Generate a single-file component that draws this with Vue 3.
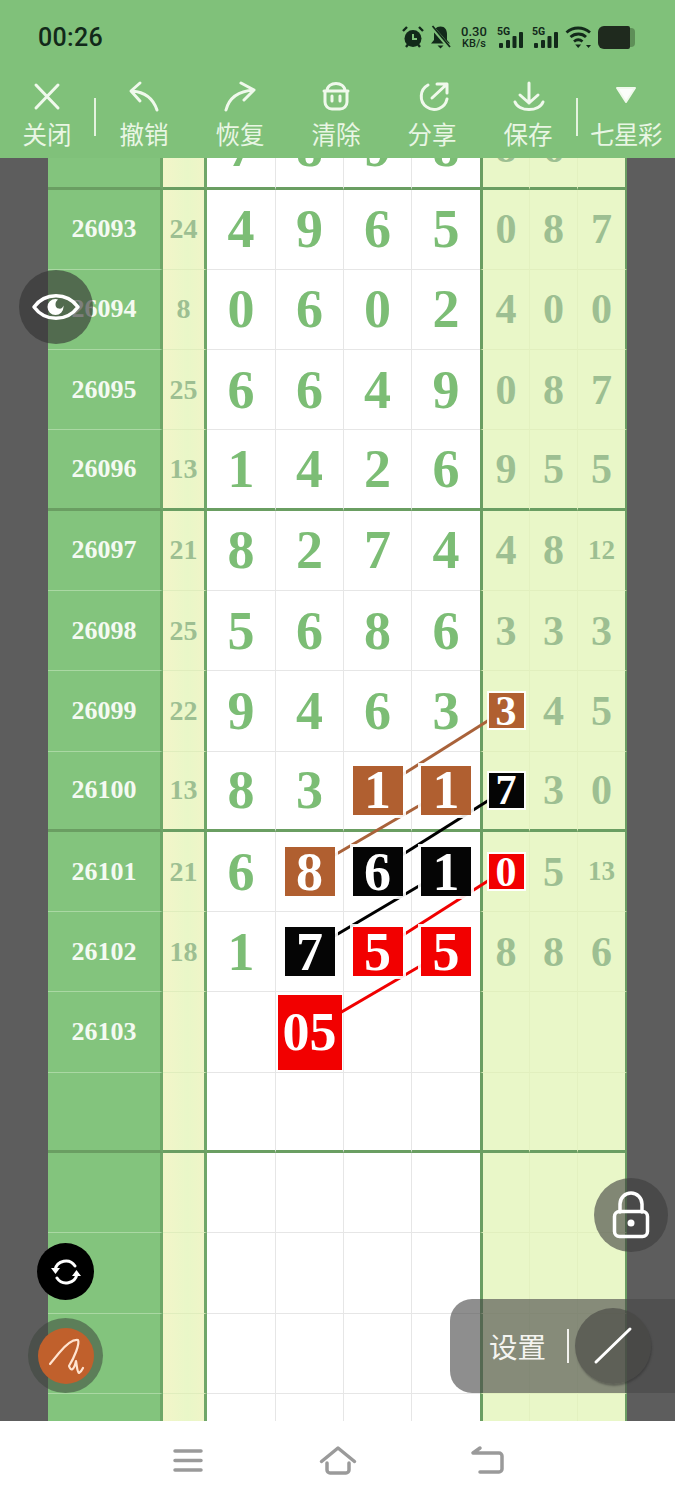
<script setup>
const rows = [
  { id: '26092', sum: '32', d: ['7', '8', '9', '8'], t: ['8', '6', '13'], end: true },
  { id: '26093', sum: '24', d: ['4', '9', '6', '5'], t: ['0', '8', '7'] },
  { id: '26094', sum: '8', d: ['0', '6', '0', '2'], t: ['4', '0', '0'] },
  { id: '26095', sum: '25', d: ['6', '6', '4', '9'], t: ['0', '8', '7'] },
  { id: '26096', sum: '13', d: ['1', '4', '2', '6'], t: ['9', '5', '5'], end: true },
  { id: '26097', sum: '21', d: ['8', '2', '7', '4'], t: ['4', '8', '12'] },
  { id: '26098', sum: '25', d: ['5', '6', '8', '6'], t: ['3', '3', '3'] },
  { id: '26099', sum: '22', d: ['9', '4', '6', '3'], t: [['3', 'brown'], '4', '5'] },
  { id: '26100', sum: '13', d: ['8', '3', ['1', 'brown'], ['1', 'brown']], t: [['7', 'black'], '3', '0'], end: true },
  { id: '26101', sum: '21', d: ['6', ['8', 'brown'], ['6', 'black'], ['1', 'black']], t: [['0', 'red'], '5', '13'] },
  { id: '26102', sum: '18', d: ['1', ['7', 'black'], ['5', 'red'], ['5', 'red']], t: ['8', '8', '6'] },
  { id: '26103', sum: '', d: ['', ['05', 'red big'], '', ''], t: ['', '', ''] },
  { id: '', sum: '', d: ['', '', '', ''], t: ['', '', ''], end: true },
  { id: '', sum: '', d: ['', '', '', ''], t: ['', '', ''] },
  { id: '', sum: '', d: ['', '', '', ''], t: ['', '', ''] },
  { id: '', sum: '', d: ['', '', '', ''], t: ['', '', ''] },
  { id: '', sum: '', d: ['', '', '', ''], t: ['', '', ''] }
]

const links = [
  { c: '#a9623a', x1: 309, y1: 870, x2: 446, y2: 790 },
  { c: '#a9623a', x1: 378, y1: 790, x2: 505, y2: 710 },
  { c: '#000000', x1: 309, y1: 951, x2: 446, y2: 870 },
  { c: '#000000', x1: 378, y1: 870, x2: 505, y2: 790 },
  { c: '#f00000', x1: 309, y1: 1031, x2: 446, y2: 951 },
  { c: '#f00000', x1: 378, y1: 951, x2: 505, y2: 870 }
]

const val = (c) => (Array.isArray(c) ? c[0] : c)
const mark = (c) => (Array.isArray(c) ? c[1] : '')
</script>

<template>
  <div class="screen">
    <header class="top">
      <div class="status">
        <span class="time">00:26</span>
        <div class="sys">
          <svg class="i-alarm" width="22" height="24" viewBox="0 0 22 24">
            <circle cx="11" cy="13.5" r="8.5" fill="#12291a" />
            <path d="M11 9v5h4" fill="none" stroke="#80c17a" stroke-width="2" />
            <path d="M1 6l4-4M21 6l-4-4M4 22l2-2.500M18 22l-2-2.500" stroke="#12291a" stroke-width="2.400" fill="none" />
          </svg>
          <svg class="i-bell" width="21" height="24" viewBox="0 0 21 24">
            <path d="M10.500 1.500c4.500 0 6.500 3.500 6.500 7.500v6l3 3.500H1l3-3.500V9c0-4 2-7.500 6.500-7.500z" fill="#12291a" />
            <path d="M7.500 20.500h6L10.500 23.500z" fill="#12291a" />
            <path d="M1.500 1.500l18 21" stroke="#80c17a" stroke-width="4" />
            <path d="M2.500 1l17.500 21" stroke="#12291a" stroke-width="1.800" />
          </svg>
          <div class="speed"><span>0.30</span><span class="unit">KB/s</span></div>
          <svg class="i-sig" width="27" height="24" viewBox="0 0 27 24">
            <text x="0" y="10" class="g5">5G</text>
            <rect x="2" y="18" width="4" height="5" rx="1" />
            <rect x="9" y="15" width="4" height="8" rx="1" />
            <rect x="15.500" y="11" width="4" height="12" rx="1" />
            <rect x="22" y="7" width="4" height="16" rx="1" />
          </svg>
          <svg class="i-sig" width="27" height="24" viewBox="0 0 27 24">
            <text x="0" y="10" class="g5">5G</text>
            <rect x="2" y="18" width="4" height="5" rx="1" />
            <rect x="9" y="15" width="4" height="8" rx="1" />
            <rect x="15.500" y="11" width="4" height="12" rx="1" />
            <rect x="22" y="7" width="4" height="16" rx="1" />
          </svg>
          <svg class="i-wifi" width="27" height="24" viewBox="0 0 27 24">
            <path d="M1.500 7.500C8 1.500 18 1.500 25 7.500M5.500 12C10 8 17 8 21 12M9 16.500c2.500-2 6-2 8.500 0" fill="none" stroke="#12291a" stroke-width="2.800" />
            <path d="M13.200 23l-3-3.500h6z" fill="#12291a" />
            <path d="M21 20h5l-2.500 3z" fill="#12291a" />
          </svg>
          <div class="battery"><span class="cell"></span><span class="tip"></span></div>
        </div>
      </div>

      <nav class="tools">
        <button class="tool wide">
          <svg width="50" height="36" viewBox="0 0 50 36"><path d="M14 7l22 23M36 7L14 30" /></svg>
          <span>关闭</span>
        </button>
        <i class="sep"></i>
        <button class="tool">
          <svg width="50" height="36" viewBox="0 0 50 36"><path d="M38 32C34 20 26 14 13 13M21 5l-9 8 9 10" /></svg>
          <span>撤销</span>
        </button>
        <button class="tool">
          <svg width="50" height="36" viewBox="0 0 50 36"><path d="M11 32C14 20 24 13 39 12M26 5l13 7-10 10" /></svg>
          <span>恢复</span>
        </button>
        <button class="tool">
          <svg width="50" height="36" viewBox="0 0 50 36"><path d="M13 13h24M16 13c0-10 18-10 18 0M14 13h22v11a7 7 0 0 1-7 7h-8a7 7 0 0 1-7-7zM21 18v5M29 18v5" /></svg>
          <span>清除</span>
        </button>
        <button class="tool">
          <svg width="50" height="36" viewBox="0 0 50 36"><path d="M21 7A13 13 0 1 0 40 21M25 20L40 6M30 6h10v9" /></svg>
          <span>分享</span>
        </button>
        <button class="tool">
          <svg width="50" height="36" viewBox="0 0 50 36"><path d="M26 5v20M17 17l9 8 9-8M12 24c4 10 24 10 28 0" /></svg>
          <span>保存</span>
        </button>
        <i class="sep"></i>
        <button class="tool">
          <svg width="50" height="36" viewBox="0 0 50 36"><path class="solid" d="M16 10h18l-9 14z" /></svg>
          <span class="lottery">七星彩</span>
        </button>
      </nav>
    </header>

    <main class="board">
      <div class="table">
        <div v-for="(r, i) in rows" :key="i" class="row" :class="{ end: r.end }">
          <div class="cell-id">{{ r.id }}</div>
          <div class="cell-sum">{{ r.sum }}</div>
          <div v-for="(c, j) in r.d" :key="'d' + j" class="cell-d">
            <span v-if="mark(c)" class="chip" :class="mark(c)">{{ val(c) }}</span>
            <template v-else>{{ c }}</template>
          </div>
          <div
            v-for="(c, j) in r.t"
            :key="'t' + j"
            class="cell-t"
            :class="{ first: j === 0, last: j === 2, small: val(c).length > 1 }"
          >
            <span v-if="mark(c)" class="chip mini" :class="mark(c)">{{ val(c) }}</span>
            <template v-else>{{ c }}</template>
          </div>
        </div>
      </div>
      <svg class="links" width="675" height="1263" viewBox="0 158 675 1263">
        <line v-for="(l, i) in links" :key="i" :x1="l.x1" :y1="l.y1" :x2="l.x2" :y2="l.y2" :stroke="l.c" stroke-width="3" />
      </svg>
    </main>

    <footer class="nav">
      <svg width="40" height="40" viewBox="0 0 40 40"><path d="M7 10h26M7 19.500h26M7 29h26" /></svg>
      <svg width="40" height="40" viewBox="0 0 40 40"><path d="M3.500 20.500L20 7l16.500 13.500M9 22v7a3 3 0 0 0 3 3h16a3 3 0 0 0 3-3v-7" /></svg>
      <svg width="40" height="40" viewBox="0 0 40 40"><path d="M5 12h26a3 3 0 0 1 3 3v13a3 3 0 0 1-3 3H12M12 7l-7 5" /></svg>
    </footer>

    <div class="float eye">
      <svg width="50" height="36" viewBox="0 0 50 36">
        <path class="line" d="M3 18C14 3 36 3 47 18C36 33 14 33 3 18z" />
        <path fill="#fff" d="M24.500 10a8 8 0 1 0 8 8c0-.5 0-1-.1-1.500a4 4 0 0 1-7.900-1c0-2 .7-3.500 2.500-5-.8-.3-1.600-.5-2.500-.5z" />
      </svg>
    </div>

    <div class="float lock">
      <svg width="40" height="50" viewBox="0 0 40 50">
        <path class="line" d="M9 22v-8a11 11 0 0 1 22 0v8" />
        <rect class="line" x="3.500" y="21.500" width="33" height="25" rx="5" />
        <circle cx="20" cy="33" r="3.500" fill="#fff" />
      </svg>
    </div>

    <div class="float refresh">
      <svg width="36" height="36" viewBox="0 0 36 36">
        <path class="line thin" d="M7 16a11 11 0 0 1 20-4M29 20a11 11 0 0 1-20 4" />
        <path fill="#fff" d="M3 14h9l-4.500 6zM33 22h-9l4.500-6z" />
      </svg>
    </div>

    <div class="float pen-ring">
      <div class="pen">
        <svg width="56" height="56" viewBox="0 0 56 56">
          <path d="M12 36L21 25C26 19 34 11 40 12C42 16 36 30 31 38C33 44 36 42 38 33C39 38 39 44 41 45C43 44 44 42 45 40" fill="none" stroke="#ffe3cf" stroke-width="2.200" stroke-linecap="round" stroke-linejoin="round" />
        </svg>
      </div>
    </div>

    <div class="float panel">
      <span class="set">设置</span>
      <i class="bar"></i>
      <div class="slash">
        <svg width="76" height="76" viewBox="0 0 76 76"><path d="M21 54L55 21" stroke="#fff" stroke-width="3" stroke-linecap="round" /></svg>
      </div>
    </div>
  </div>
</template>

<style scoped>
.screen {
  position: relative;
  width: 675px;
  height: 1500px;
  overflow: hidden;
  background: #fff;
  font-family: "Noto Sans CJK SC", "Noto Sans", sans-serif;
}
.top {
  height: 158px;
  background: #80c17a;
  position: relative;
  z-index: 4;
}
.status {
  height: 78px;
  display: flex;
  align-items: center;
  justify-content: space-between;
  padding: 0 39px 4px 38px;
  box-sizing: border-box;
  color: #12291a;
}
.time {
  font: 500 25px Roboto, sans-serif;
  letter-spacing: 0.3px;
}
.sys {
  display: flex;
  align-items: center;
}
.i-bell { margin-left: 6px; }
.speed {
  margin: 0 9px;
  width: 28px;
  display: flex;
  flex-direction: column;
  align-items: center;
  font: 500 13px/12px Roboto, sans-serif;
}
.unit { font-size: 11px; line-height: 11px; }
.i-sig { margin-right: 8px; fill: #12291a; }
.g5 { font: 700 10.500px Roboto, sans-serif; }
.i-wifi { margin: 0 6px 0 -2px; }
.battery {
  display: flex;
  align-items: center;
  width: 38px;
  height: 23px;
}
.battery .cell {
  width: 32px;
  height: 23px;
  background: #1f2a1e;
  border-radius: 6px 2px 2px 6px;
}
.battery .tip {
  width: 5px;
  height: 19px;
  background: #5e8f58;
  border-radius: 0 4px 4px 0;
}
.tools {
  display: flex;
  height: 80px;
  align-items: flex-start;
}
.tool {
  width: 96px;
  padding: 0;
  border: 0;
  background: none;
  display: flex;
  flex-direction: column;
  align-items: center;
  color: #e9f6e4;
  font: 400 24.500px/28px "Noto Sans CJK SC", sans-serif;
}
.tool.wide { width: 94px; }
.tool span { margin-top: 6px; white-space: nowrap; }
.tool .lottery { letter-spacing: -0.500px; }
.tool svg {
  fill: none;
  stroke: #f0f9ec;
  stroke-width: 3;
  stroke-linecap: round;
  stroke-linejoin: round;
}
.tool svg .solid { fill: #fbfdfa; stroke-width: 2; }
.sep {
  width: 2px;
  height: 38px;
  margin-top: 20px;
  background: #e4f3df;
}
.board {
  position: relative;
  height: 1263px;
  overflow: hidden;
  background: #5d5d5d;
}
.table {
  margin: -48.800px 0 0 48px;
  width: 579px;
}
.row {
  height: 80.300px;
  display: grid;
  grid-template-columns: 115px 44px 69px 68px 68px 68px 50px 48px 49px;
}
.row > div {
  box-sizing: border-box;
  display: flex;
  align-items: center;
  justify-content: center;
  height: 80.300px;
  border-bottom: 1px solid transparent;
  font-family: "Liberation Serif", serif;
  font-weight: 700;
  line-height: 1;
}
.row.end > div { border-bottom: 3px solid #6a9e62; }
.cell-id {
  background: #83c47d;
  color: #f4faf2;
  font-size: 26px;
  border-right: 3px solid #6fa668;
  border-bottom-color: #aad8a3 !important;
}
.cell-sum {
  background: linear-gradient(90deg, #f3f5c9, #e9f7c8 60%, #f0f5c8);
  color: #9dbf92;
  font-size: 28px;
  border-right: 3px solid #6fa668;
  border-bottom-color: #e0edbd !important;
}
.cell-d {
  background: #fff;
  color: #7cbd75;
  font-size: 54px;
  border-right: 1px solid #e6e6e6;
  border-bottom-color: #e6e6e6 !important;
}
.row > .cell-d:nth-child(6) { border-right: 0; }
.cell-t {
  background: #e9f7c8;
  color: #9dbf92;
  font-size: 42px;
  border-right: 1px solid #e3f1c0;
  border-bottom-color: #e1efbe !important;
}
.cell-t.first { border-left: 3px solid #6a9e62; }
.cell-t.last { border-right: 2px solid #6a9e62; }
.cell-t.small { font-size: 27px; }
.row.end > .cell-d,
.row.end > .cell-t,
.row.end > .cell-sum,
.row.end > .cell-id { border-bottom-color: #6a9e62 !important; }
.chip {
  position: relative;
  z-index: 2;
  width: 50px;
  height: 49px;
  display: flex;
  align-items: center;
  justify-content: center;
  color: #fff;
  font-size: 54px;
  box-shadow: 0 0 0 3px rgba(255, 255, 255, 0.9);
}
.chip.mini {
  width: 35px;
  height: 35px;
  font-size: 42px;
  box-shadow: 0 0 0 2px rgba(255, 255, 255, 0.95);
}
.chip.big {
  width: 64px;
  height: 75px;
  box-shadow: none;
}
.brown { background: #b05f30; }
.black { background: #050505; }
.red { background: #f20000; }
.links {
  position: absolute;
  left: 0;
  top: 0;
  z-index: 1;
  pointer-events: none;
}
.nav {
  height: 79px;
  display: flex;
  align-items: center;
  justify-content: center;
  gap: 110px;
}
.nav svg {
  fill: none;
  stroke: #9a9a9a;
  stroke-width: 3.500;
  stroke-linecap: round;
  stroke-linejoin: round;
}
.float {
  position: absolute;
  z-index: 6;
  display: flex;
  align-items: center;
  justify-content: center;
  border-radius: 50%;
}
.line {
  fill: none;
  stroke: #fff;
  stroke-width: 3.500;
  stroke-linecap: round;
  stroke-linejoin: round;
}
.line.thin { stroke-width: 3; }
.eye {
  left: 19px;
  top: 270px;
  width: 74px;
  height: 74px;
  background: rgba(52, 52, 52, 0.62);
}
.lock {
  left: 594px;
  top: 1178px;
  width: 74px;
  height: 74px;
  background: rgba(60, 60, 60, 0.6);
}
.refresh {
  left: 37px;
  top: 1243px;
  width: 57px;
  height: 57px;
  background: #000;
}
.pen-ring {
  left: 28px;
  top: 1318px;
  width: 75px;
  height: 75px;
  background: rgba(60, 70, 60, 0.55);
}
.pen {
  width: 56px;
  height: 56px;
  border-radius: 50%;
  background: #c0602c;
}
.pen svg { display: block; }
.panel {
  left: 450px;
  top: 1299px;
  width: 225px;
  height: 94px;
  border-radius: 22px 0 0 22px;
  background: rgba(72, 72, 72, 0.62);
  justify-content: flex-start;
  padding-left: 39px;
  box-sizing: border-box;
}
.set {
  color: #f4f4f0;
  font-size: 28.500px;
  line-height: 34px;
  white-space: nowrap;
}
.bar {
  width: 2px;
  height: 34px;
  margin-left: 21px;
  background: #f2f2ee;
}
.slash {
  width: 76px;
  height: 76px;
  margin-left: 6px;
  border-radius: 50%;
  background: rgba(70, 70, 66, 0.62);
  box-shadow: 1px 2px 2px rgba(40, 40, 40, 0.4);
}
.slash svg { display: block; }
</style>
